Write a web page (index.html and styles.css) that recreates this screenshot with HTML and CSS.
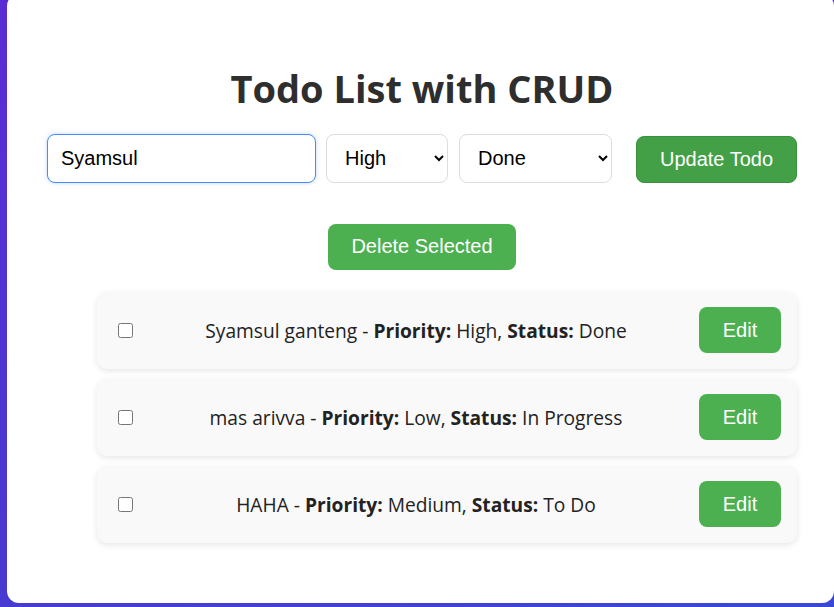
FILE: index.html
```html
<!DOCTYPE html>
<html lang="en">
<head>
<meta charset="utf-8">
<title>Todo List with CRUD</title>
<link rel="stylesheet" href="styles.css">
</head>
<body>
<div class="card">
  <h1 class="title">Todo List with CRUD</h1>
  <div class="form-row">
    <input class="field field-text" type="text" value="Syamsul">
    <select class="field field-priority">
      <option>Low</option>
      <option>Medium</option>
      <option selected>High</option>
    </select>
    <select class="field field-status">
      <option>To Do</option>
      <option>In Progress</option>
      <option selected>Done</option>
    </select>
    <button class="btn btn-update">Update Todo</button>
  </div>
  <div class="delete-row">
    <button class="btn btn-delete">Delete Selected</button>
  </div>
  <ul class="todo-list">
    <li class="todo-item">
      <input class="todo-check" type="checkbox">
      <span class="todo-text">Syamsul ganteng - <b>Priority:</b> High, <b>Status:</b> Done</span>
      <button class="btn btn-edit">Edit</button>
    </li>
    <li class="todo-item">
      <input class="todo-check" type="checkbox">
      <span class="todo-text">mas arivva - <b>Priority:</b> Low, <b>Status:</b> In Progress</span>
      <button class="btn btn-edit">Edit</button>
    </li>
    <li class="todo-item">
      <input class="todo-check" type="checkbox">
      <span class="todo-text">HAHA - <b>Priority:</b> Medium, <b>Status:</b> To Do</span>
      <button class="btn btn-edit">Edit</button>
    </li>
  </ul>
</div>
</body>
</html>
```
FILE: styles.css
```css
html, body {
  margin: 0;
  padding: 0;
  height: 100%;
  overflow: hidden;
}
body {
  background: linear-gradient(160deg, #5a2cd4 0%, #4a38cf 60%, #3a48d6 100%);
  font-family: "Open Sans", "Noto Sans", sans-serif;
  color: #333;
}
.card {
  box-sizing: border-box;
  margin: -6px 0 0 7px;
  width: 827px;
  height: 609px;
  padding: 40px 37px 40px 40px;
  background: #fff;
  border-radius: 12px;
}
.title {
  margin: 30.3px 0 21.7px;
  font-size: 38px;
  line-height: 48px;
  font-weight: 700;
  text-align: center;
  color: #2e2e2e;
}
.form-row {
  display: flex;
  align-items: flex-end;
}
.field {
  box-sizing: border-box;
  height: 49px;
  font-family: "Liberation Sans", Arial, sans-serif;
  font-size: 20px;
  color: #000;
  background: #fff;
  border: 1px solid #ddd;
  border-radius: 8px;
  padding: 0 12px;
}
.field-text {
  width: 269px;
  padding-left: 13px;
  border-color: #4a8af4;
  box-shadow: 0 0 4px rgba(74, 138, 244, 0.35);
  outline: none;
}
.field-priority {
  width: 122px;
  margin-left: 10px;
  padding-left: 14px;
}
.field-status {
  width: 153px;
  margin-left: 11px;
  padding-left: 14px;
}
.btn {
  font-family: "Liberation Sans", Arial, sans-serif;
  font-size: 20px;
  line-height: 23px;
  color: #fff;
  background: #4caf50;
  border: none;
  border-radius: 8px;
  padding: 11.5px 24px;
  cursor: pointer;
}
.btn-update {
  margin-left: 24px;
  width: 161px;
  padding: 11px 0;
  background: #43a047;
  border: 1px solid #3a9140;
}
.delete-row {
  display: flex;
  justify-content: center;
  margin-top: 41px;
}
.btn-delete {
  width: 188px;
  padding-left: 0;
  padding-right: 0;
}
.todo-list {
  list-style: none;
  margin: 22px 0 0 50px;
  padding: 0;
  display: flex;
  flex-direction: column;
  gap: 10px;
}
.todo-item {
  display: flex;
  align-items: center;
  padding: 15.5px 16px 15.5px 21px;
  background: #f9f9f9;
  border-radius: 10px;
  box-shadow: 0 2px 6px rgba(0, 0, 0, 0.1);
}
.todo-check {
  margin: 0;
  width: 15px;
  height: 15px;
}
.todo-text {
  flex: 1;
  text-align: center;
  font-size: 19.2px;
  color: #222;
}
.todo-text b {
  font-weight: 700;
}
.btn-edit {
  width: 82px;
  padding-left: 0;
  padding-right: 0;
}
```
